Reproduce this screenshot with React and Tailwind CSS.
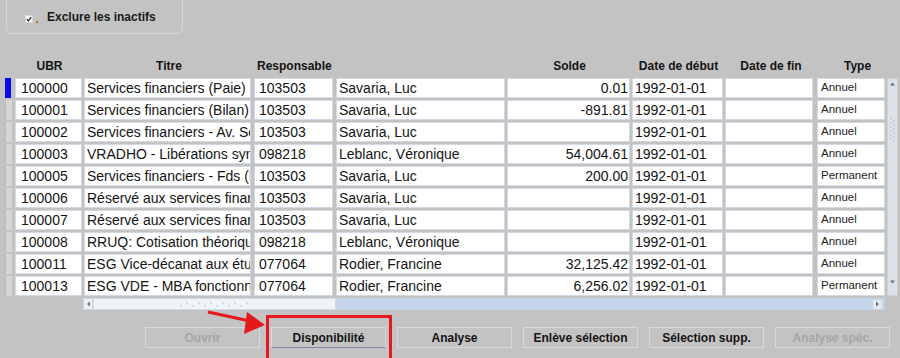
import React from 'react';

const columns = [
    { label: 'UBR', cell: 'w-[67px] mr-[2px] pl-[5px]', head: 'w-[69px] text-center' },
    { label: 'Titre', cell: 'w-[167px] mr-[3px] pl-[2px]', head: 'w-[170px] text-center' },
    { label: 'Responsable', cell: 'w-[79px] mr-[3px] pl-[4px]', head: 'w-[82px] pl-[3px] text-left whitespace-nowrap' },
    { label: '', cell: 'w-[169px] mr-[2px] pl-[2px]', head: 'w-[171px]' },
    { label: 'Solde', cell: 'w-[123px] mr-[2px] pr-[1px] justify-end', head: 'w-[125px] text-center' },
    { label: 'Date de début', cell: 'w-[91px] mr-[2px] pl-[2px]', head: 'w-[93px] text-center' },
    { label: 'Date de fin', cell: 'w-[88px] mr-[4px] pl-[2px]', head: 'w-[92px] text-center' },
    { label: 'Type', cell: 'w-[68px] mr-[2px] pl-[3px] text-[11.5px] text-[#222]', head: 'w-[81px] text-center' },
];

const rows = [
    ['100000', 'Services financiers (Paie)', '103503', 'Savaria, Luc', '0.01', '1992-01-01', '', 'Annuel'],
    ['100001', 'Services financiers (Bilan)', '103503', 'Savaria, Luc', '-891.81', '1992-01-01', '', 'Annuel'],
    ['100002', 'Services financiers - Av. So', '103503', 'Savaria, Luc', '', '1992-01-01', '', 'Annuel'],
    ['100003', 'VRADHO - Libérations synd', '098218', 'Leblanc, Véronique', '54,004.61', '1992-01-01', '', 'Annuel'],
    ['100005', 'Services financiers - Fds (R', '103503', 'Savaria, Luc', '200.00', '1992-01-01', '', 'Permanent'],
    ['100006', 'Réservé aux services finan', '103503', 'Savaria, Luc', '', '1992-01-01', '', 'Annuel'],
    ['100007', 'Réservé aux services finan', '103503', 'Savaria, Luc', '', '1992-01-01', '', 'Annuel'],
    ['100008', 'RRUQ: Cotisation théorique', '098218', 'Leblanc, Véronique', '', '1992-01-01', '', 'Annuel'],
    ['100011', 'ESG Vice-décanat aux étu', '077064', 'Rodier, Francine', '32,125.42', '1992-01-01', '', 'Annuel'],
    ['100013', 'ESG VDE - MBA fonctionn', '077064', 'Rodier, Francine', '6,256.02', '1992-01-01', '', 'Permanent'],
];

const buttons = [
    { label: 'Ouvrir', disabled: true },
    { label: 'Disponibilité', focused: true },
    { label: 'Analyse' },
    { label: 'Enlève sélection' },
    { label: 'Sélection supp.' },
    { label: 'Analyse spéc.', disabled: true },
];

function Grip({ vertical }) {
    // little dotted grip drawn on scrollbar thumbs
    const dots = [];
    for (let i = 0; i < 12; i++) {
        dots.push(vertical
            ? <circle key={i} cx={i % 2 ? 6 : 3} cy={2 + i * 2} r="0.7" fill="#aab4c2" />
            : <circle key={i} cx={2 + i * 6} cy={i % 2 ? 3 : 6} r="0.7" fill="#aab4c2" />);
    }
    return vertical
        ? <svg width="9" height="26" viewBox="0 0 9 26">{dots}</svg>
        : <svg width="72" height="9" viewBox="0 0 72 9">{dots}</svg>;
}

function App() {
    return (
        <div className="relative w-[900px] h-[358px] overflow-hidden bg-[#c3c3c3] font-['Liberation_Sans',Arial,sans-serif] text-[#141414]">
            {/* Filtre */}
            <div className="ml-[6px] mt-[-6px] w-[177px] h-[40px] rounded-[6px] border border-[#d3d8e0] flex items-end pb-[10px] pl-[18px]">
                <div className="w-[8px] h-[8px] bg-white border border-[#d8d8d8] flex items-center justify-center">
                    <svg width="6" height="6" viewBox="0 0 6 6"><path d="M0.8 3.2 L2.4 4.8 L5.3 1.2" stroke="#222" strokeWidth="1.3" fill="none" /></svg>
                </div>
                <div className="w-[2px] h-[2px] bg-[#b07a3a] ml-[3px] mt-[8px]" />
                <span className="ml-[9px] text-[12px] font-bold leading-none text-[#1a1a1a]">Exclure les inactifs</span>
            </div>

            {/* Tableau */}
            <div className="mt-[24px] ml-[4px]">
                <div className="flex h-[16px] mb-[4px] items-center text-[12px] font-bold leading-none">
                    <div className="w-[11px]" />
                    {columns.map((c, i) => (
                        <div key={i} className={c.head}>{c.label}</div>
                    ))}
                </div>
                <div className="flex">
                    <div className="flex flex-col">
                        {rows.map((r, ri) => (
                            <div key={ri} className="flex h-[20px] mb-[2px]">
                                <div className="w-[11px] pl-[1px]">
                                    <div className={ri === 0 ? 'w-[6px] h-[20px] bg-[#0a0af0]' : 'w-[7px] h-[20px] bg-[#d6d6d6] border-l border-[#b9b9b9]'} />
                                </div>
                                {r.map((v, ci) => (
                                    <div key={ci} className={`${columns[ci].cell} h-[20px] bg-white border border-[#d2d9e4] flex items-center overflow-hidden whitespace-nowrap ${ci === 7 ? '' : 'text-[14px]'} leading-none`}>
                                        {v}
                                    </div>
                                ))}
                            </div>
                        ))}
                    </div>
                    {/* barre de défilement verticale */}
                    <div className="w-[11px] h-[218px] bg-[#dde2e9] border border-[#cdd3dc] rounded-[2px] flex flex-col items-center justify-between py-[2px]">
                        <svg width="7" height="6" viewBox="0 0 7 6"><path d="M1 4.5 L3.5 1.5 L6 4.5 Z" fill="#6b7585" /></svg>
                        <div className="flex-1 flex flex-col items-center pt-[30px]"><Grip vertical /></div>
                        <svg width="7" height="6" viewBox="0 0 7 6" className="mb-[8px]"><path d="M1 1.5 L3.5 4.5 L6 1.5 Z" fill="#6b7585" /></svg>
                    </div>
                </div>
            </div>

            {/* barre de défilement horizontale */}
            <div className="ml-[83px] mt-[0px] w-[802px] h-[12px] flex bg-[#c5d5e8]">
                <div className="w-[10px] h-[12px] bg-[#eef1f5] border border-[#cfd6e0] flex items-center justify-center">
                    <svg width="5" height="6" viewBox="0 0 5 6"><path d="M4 0.5 L1 3 L4 5.5 Z" fill="#6b7585" /></svg>
                </div>
                <div className="w-[243px] h-[12px] bg-[#f0f3f7] border border-[#d3dae4] flex items-center justify-center">
                    <Grip />
                </div>
                <div className="flex-1 flex justify-end items-center pr-[3px]">
                    <div className="w-[9px] h-[9px] bg-[#e3e8ef] flex items-center justify-center">
                        <svg width="5" height="6" viewBox="0 0 5 6"><path d="M1 0.5 L4 3 L1 5.5 Z" fill="#6b7585" /></svg>
                    </div>
                </div>
            </div>

            {/* Boutons */}
            <div className="flex gap-[11px] ml-[145px] mt-[17px]">
                {buttons.map((b) => (
                    <button
                        key={b.label}
                        className={`w-[115px] h-[21px] text-[12px] font-bold leading-none border ${b.focused ? 'border-[#d4d9e1] border-b-[#7e8ba0]' : 'border-[#d4d9e1]'} ${b.disabled ? 'text-[#a6a6a6]' : 'text-[#141414]'} bg-[#c3c3c3]`}
                    >
                        {b.label}
                    </button>
                ))}
            </div>

            {/* Annotation */}
            <div className="absolute left-[266px] top-[315px] w-[126px] h-[46px] border-[3px] border-[#e3191b]" />
            <svg className="absolute left-0 top-0" width="900" height="358" viewBox="0 0 900 358">
                <line x1="208" y1="312" x2="250" y2="321" stroke="#e3191b" strokeWidth="3" />
                <polygon points="265,325 247,312 244,334" fill="#e3191b" />
            </svg>
        </div>
    );
}

export default App;
